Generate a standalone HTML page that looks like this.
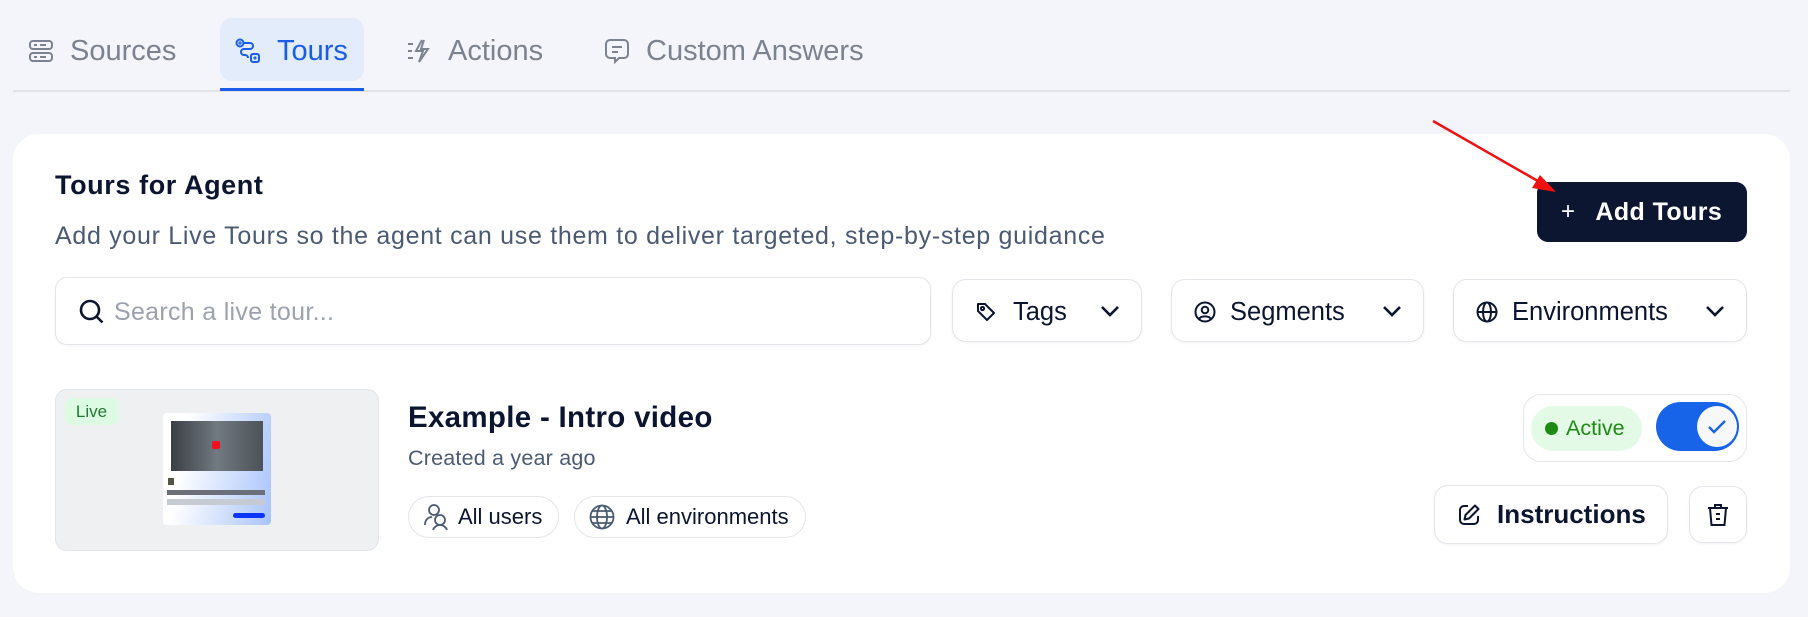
<!DOCTYPE html>
<html><head><meta charset="utf-8"><style>
*{box-sizing:border-box;margin:0;padding:0}
body{width:1808px;height:617px;overflow:hidden;background:#f4f5fa;font-family:"Liberation Sans",sans-serif;position:relative;color:#0b1530}
.abs{position:absolute}
.tab{position:absolute;top:30px;height:42px;display:flex;align-items:center;font-size:29px;color:#7b8290}
.tab svg{margin-right:16px}
.card{left:13px;top:134px;width:1777px;height:459px;background:#fff;border-radius:26px}
.btn{position:absolute;border:1px solid #e3e5ea;border-radius:14px;background:#fff;display:flex;align-items:center;box-shadow:0 1px 3px rgba(0,0,0,.05)}
.dd{font-size:25.5px;color:#0b1530;padding-left:22px;padding-top:3px}
.dd .chev{position:absolute;right:20px;top:20px}
.pill{position:absolute;border:1px solid #e3e5ea;border-radius:22px;display:flex;align-items:center;font-size:22px;color:#0b1530;padding-left:14px}
</style></head><body>
<div class="abs" style="left:220px;top:18px;width:144px;height:63px;background:#e3ecfa;border-radius:12px"></div>
<div class="abs" style="left:13px;top:90px;width:1777px;height:2px;background:#e0e2e8"></div>
<div class="abs" style="left:220px;top:88px;width:144px;height:3px;background:#1a5ce6"></div>
<div class="tab" style="left:28px"><svg width="26" height="26" viewBox="0 0 26 26" fill="none" stroke="#7b8290" stroke-width="2"><rect x="2" y="3" width="22" height="8" rx="3"/><rect x="2" y="15" width="22" height="8" rx="3"/><path d="M6 7h3M12 7h6M6 19h3M12 19h6"/></svg>Sources</div>
<div class="tab" style="left:235px;color:#1a5ce6"><svg width="26" height="26" viewBox="0 0 26 26" fill="none" stroke="#1a5ce6" stroke-width="2"><circle cx="5" cy="5" r="3.5"/><circle cx="5" cy="5" r=".6"/><rect x="16" y="16" width="8" height="8" rx="2"/><circle cx="20" cy="20" r=".6"/><path d="M9 5h6a3 3 0 0 1 0 6H9a3 3 0 0 0 0 6h1a3 3 0 0 1 3 3v0"/></svg>Tours</div>
<div class="tab" style="left:406px"><svg width="26" height="26" viewBox="0 0 26 26" fill="none" stroke="#7b8290" stroke-width="2"><path d="M16 2l-6 11h7l-4 11 9-13h-7l3-9"/><path d="M2 6h5M2 13h4M2 20h5"/></svg>Actions</div>
<div class="tab" style="left:604px"><svg width="26" height="28" viewBox="0 0 26 28" fill="none" stroke="#7b8290" stroke-width="2"><path d="M6 3h14a4 4 0 0 1 4 4v10a4 4 0 0 1-4 4h-5l-4 4v-4H6a4 4 0 0 1-4-4V7a4 4 0 0 1 4-4z"/><path d="M8 10h10M8 15h6"/></svg>Custom Answers</div>

<div class="abs card"></div>
<div class="abs" style="left:55px;top:170px;font-size:27px;letter-spacing:0.6px;font-weight:bold;color:#0b1530">Tours for Agent</div>
<div class="abs" style="left:55px;top:222px;font-size:25px;letter-spacing:0.7px;color:#4a5a72">Add your Live Tours so the agent can use them to deliver targeted, step-by-step guidance</div>
<div class="abs" style="left:1537px;top:182px;width:210px;height:60px;background:#0c1630;border-radius:11px;color:#fff;font-weight:bold;font-size:25px;letter-spacing:0.4px;display:flex;align-items:center;padding-left:24px"><span style="font-weight:normal;font-size:24px;margin-right:20px">+</span>Add Tours</div>
<svg class="abs" style="left:0;top:0" width="1808" height="617"><line x1="1433" y1="121" x2="1543" y2="184" stroke="#f01010" stroke-width="2.5"/><polygon points="1556,192 1532,188 1540,175" fill="#f01010"/></svg>

<div class="btn" style="left:55px;top:277px;width:876px;height:68px;border-radius:12px;padding-top:2px"><svg style="margin-left:22px" width="28" height="28" viewBox="0 0 28 28" fill="none" stroke="#0b1530" stroke-width="2.6"><circle cx="12" cy="12" r="9"/><path d="M18.5 18.5l6 6"/></svg><span style="font-size:25px;letter-spacing:0.3px;color:#9ba1ad;margin-left:8px">Search a live tour...</span></div>
<div class="btn dd" style="left:952px;top:279px;width:190px;height:63px"><svg width="22" height="22" viewBox="0 0 22 22" fill="none" stroke="#0b1530" stroke-width="2"><path d="M3 3h7l9 9-7 7-9-9z" stroke-linejoin="round"/><circle cx="7.5" cy="7.5" r="1.6"/></svg><span style="margin-left:16px">Tags</span><svg class="chev" width="22" height="22" viewBox="0 0 22 22" fill="none" stroke="#0b1530" stroke-width="2.6"><path d="M3 7l8 8 8-8"/></svg></div>
<div class="btn dd" style="left:1171px;top:279px;width:253px;height:63px"><svg width="22" height="22" viewBox="0 0 22 22" fill="none" stroke="#0b1530" stroke-width="2"><circle cx="11" cy="11" r="9.5"/><circle cx="11" cy="9" r="3.3"/><path d="M5 18c2-3.5 10-3.5 12 0"/></svg><span style="margin-left:14px">Segments</span><svg class="chev" width="22" height="22" viewBox="0 0 22 22" fill="none" stroke="#0b1530" stroke-width="2.6"><path d="M3 7l8 8 8-8"/></svg></div>
<div class="btn dd" style="left:1453px;top:279px;width:294px;height:63px"><svg width="22" height="22" viewBox="0 0 22 22" fill="none" stroke="#0b1530" stroke-width="2"><circle cx="11" cy="11" r="9.5"/><ellipse cx="11" cy="11" rx="4" ry="9.5"/><path d="M1.5 11h19"/></svg><span style="margin-left:14px">Environments</span><svg class="chev" width="22" height="22" viewBox="0 0 22 22" fill="none" stroke="#0b1530" stroke-width="2.6"><path d="M3 7l8 8 8-8"/></svg></div>

<div class="abs" style="left:55px;top:389px;width:324px;height:162px;background:#eff0f2;border:1px solid #e2e4e8;border-radius:12px"></div>
<div class="abs" style="left:65px;top:398px;width:53px;height:27px;background:#ddfbe2;border-radius:7px;color:#217a34;font-size:17px;display:flex;align-items:center;justify-content:center">Live</div>
<div class="abs" style="left:163px;top:413px;width:108px;height:112px;border-radius:4px;background:linear-gradient(100deg,#fff 20%,#a9c4fb)"></div>
<div class="abs" style="left:171px;top:421px;width:92px;height:50px;background:linear-gradient(90deg,#3b3f44,#707a80 50%,#4c5358)"></div>
<div class="abs" style="left:212px;top:441px;width:8px;height:8px;background:#f4101c;border-radius:2px"></div>
<div class="abs" style="left:168px;top:478px;width:6px;height:7px;background:#554"></div>
<div class="abs" style="left:167px;top:490px;width:98px;height:5px;background:#6a6f7a"></div>
<div class="abs" style="left:167px;top:499px;width:98px;height:6px;background:#c6cad2"></div>
<div class="abs" style="left:233px;top:513px;width:32px;height:5px;background:#0a35ff;border-radius:3px"></div>

<div class="abs" style="left:408px;top:401px;font-size:29.5px;letter-spacing:0.3px;font-weight:bold;color:#0b1530">Example - Intro video</div>
<div class="abs" style="left:408px;top:446px;font-size:21.5px;letter-spacing:0.2px;color:#4a5a72">Created a year ago</div>
<div class="pill" style="left:408px;top:496px;width:151px;height:42px"><svg width="26" height="28" viewBox="0 0 26 28" fill="none" stroke="#4a5a72" stroke-width="1.8"><circle cx="11" cy="7" r="5"/><circle cx="17" cy="17" r="5"/><path d="M2 22c0-5 3-8 7-8"/><path d="M10 27c1-3 4-5 7-5s6 2 7 5"/></svg><span style="margin-left:9px">All users</span></div>
<div class="pill" style="left:574px;top:496px;width:232px;height:42px"><svg width="26" height="26" viewBox="0 0 26 26" fill="none" stroke="#4a5a72" stroke-width="1.8"><circle cx="13" cy="13" r="11.5"/><ellipse cx="13" cy="13" rx="5" ry="11.5"/><path d="M1.5 13h23M3 7h20M3 19h20"/></svg><span style="margin-left:11px">All environments</span></div>

<div class="abs" style="left:1523px;top:394px;width:224px;height:68px;border:1px solid #e3e5ea;border-radius:18px"></div>
<div class="abs" style="left:1531px;top:406px;width:111px;height:45px;background:#e3fbe6;border-radius:23px;color:#1d8a14;font-size:21.5px;display:flex;align-items:center;padding-left:14px"><span style="width:13px;height:13px;border-radius:50%;background:#1d8a14;margin-right:8px"></span>Active</div>
<div class="abs" style="left:1656px;top:402px;width:83px;height:49px;background:#1764e8;border-radius:25px"></div>
<div class="abs" style="left:1696px;top:405px;width:42px;height:43px;background:#f7f8fa;border-radius:50%;border:1.5px solid #1764e8"></div>
<svg class="abs" style="left:1705px;top:415px" width="24" height="24" viewBox="0 0 24 24" fill="none" stroke="#1764e8" stroke-width="2.4"><path d="M4 12l5 5 11-11"/></svg>

<div class="btn" style="left:1434px;top:485px;width:234px;height:59px;padding-left:22px;font-weight:bold;font-size:26px"><svg width="24" height="24" viewBox="0 0 24 24" fill="none" stroke="#0b1530" stroke-width="2"><path d="M11 3H7a4 4 0 0 0-4 4v10a4 4 0 0 0 4 4h10a4 4 0 0 0 4-4v-4"/><path d="M18 2.5l3.5 3.5L12 15.5l-4.5 1 1-4.5z" stroke-linejoin="round"/></svg><span style="margin-left:16px">Instructions</span></div>
<div class="btn" style="left:1689px;top:486px;width:58px;height:57px;justify-content:center"><svg width="24" height="26" viewBox="0 0 24 26" fill="none" stroke="#0b1530" stroke-width="2"><path d="M2 6h20M9 6V3h6v3"/><path d="M4 6l1.5 17h13L20 6"/><path d="M10 12h4M10 17h4"/></svg></div>
</body></html>
